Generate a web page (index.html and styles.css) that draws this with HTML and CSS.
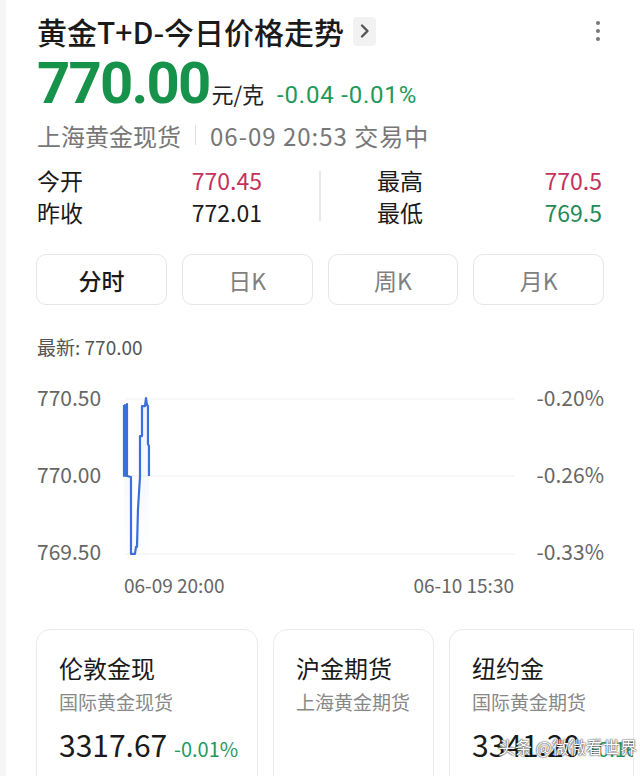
FILE: index.html
```html
<!DOCTYPE html>
<html>
<head>
  <meta charset="utf-8">
  <title>黄金T+D-今日价格走势</title>
  <link rel="stylesheet" href="styles.css">
</head>
<body>
  <div class="panel">

    <!-- 标题 -->
    <div class="head">
      <h1 class="title">黄金T+D-今日价格走势</h1>
      <span class="more-box">
        <svg width="12" height="16" viewBox="0 0 12 16"><path d="M3 2.5 L8.5 8 L3 13.5" fill="none" stroke="#555" stroke-width="2.4" stroke-linecap="round" stroke-linejoin="round"/></svg>
      </span>
      <span class="dots"><i></i><i></i><i></i></span>
    </div>

    <!-- 价格 -->
    <div class="price-row">
      <span class="price">770.00</span>
      <span class="unit">元/克</span>
      <span class="change">-0.04 -0.01%</span>
    </div>
    <div class="market">
      <span>上海黄金现货</span>
      <span class="sep"></span>
      <span class="time">06-09 20:53 交易中</span>
    </div>

    <!-- 行情 -->
    <div class="stats">
      <div class="stat-col">
        <div class="stat"><span>今开</span><span class="up">770.45</span></div>
        <div class="stat"><span>昨收</span><span>772.01</span></div>
      </div>
      <div class="stat-div"></div>
      <div class="stat-col">
        <div class="stat"><span>最高</span><span class="up">770.5</span></div>
        <div class="stat"><span>最低</span><span class="down">769.5</span></div>
      </div>
    </div>

    <div class="tabs">
      <button class="tab active">分时</button>
      <button class="tab">日K</button>
      <button class="tab">周K</button>
      <button class="tab">月K</button>
    </div>

    <!-- 分时图 -->
    <div class="latest">最新: 770.00</div>
    <div class="chart">
      <div class="y-left">
        <span>770.50</span>
        <span>770.00</span>
        <span>769.50</span>
      </div>
      <svg class="plot" width="402" height="190" viewBox="0 0 402 190">
        <defs>
          <linearGradient id="fill" x1="0" y1="0" x2="0" y2="1">
            <stop offset="0" stop-color="#3a6fd8" stop-opacity="0.08"/>
            <stop offset="1" stop-color="#3a6fd8" stop-opacity="0"/>
          </linearGradient>
        </defs>
        <line x1="7" y1="20" x2="397" y2="20" stroke="#f0f0f0" stroke-width="1"/>
        <line x1="7" y1="97" x2="397" y2="97" stroke="#f0f0f0" stroke-width="1"/>
        <line x1="7" y1="175" x2="397" y2="175" stroke="#f0f0f0" stroke-width="1"/>
        <polygon points="6,26 9,25 9,97 13,98 13,175 17,175 18,168 19,168 20,130 22,98 22,57 24,57 24,27 27,27 28,19 29,26 30,27 30,65 31,67 31,97 31,190 6,190" fill="url(#fill)"/>
        <polyline points="6,26 6,97 7,26 8,97 9,25 9,97 13,98 13,175 17,175 18,168 19,168 20,130 22,98 22,57 24,57 24,27 27,27 28,19 29,26 30,27 30,65 31,67 31,97" fill="none" stroke="#3b6fdc" stroke-width="2.2" stroke-linejoin="round"/>
      </svg>
      <div class="y-right">
        <span>-0.20%</span>
        <span>-0.26%</span>
        <span>-0.33%</span>
      </div>
    </div>
    <div class="x-axis">
      <span>06-09 20:00</span>
      <span>06-10 15:30</span>
    </div>

    <!-- 相关品种 -->
    <div class="cards">
      <div class="card w1">
        <div class="card-name">伦敦金现</div>
        <div class="card-sub">国际黄金现货</div>
        <div class="card-val">3317.67 <span class="card-chg">-0.01%</span></div>
      </div>
      <div class="card w2">
        <div class="card-name">沪金期货</div>
        <div class="card-sub">上海黄金期货</div>
      </div>
      <div class="card w3">
        <div class="card-name">纽约金</div>
        <div class="card-sub">国际黄金期货</div>
        <div class="card-val">3341.20 <span class="card-chg">+0.16</span></div>
      </div>
    </div>

    <div class="watermark">头条 @微微看世界</div>
  </div>
</body>
</html>
```

FILE: styles.css
```css
body {
  margin: 0;
  background: #f6f6f6;
  font-family: "Noto Sans CJK SC", "Noto Sans", sans-serif;
  color: #1a1a1a;
}

.panel {
  position: relative;
  margin-left: 6px;
  height: 776px;
  overflow: hidden;
  background: #fff;
  padding-left: 31px;
  padding-right: 36px;
}

.head {
  display: flex;
  align-items: center;
  height: 40px;
  padding-top: 11px;
}

.title {
  margin: 0;
  font-size: 30px;
  font-weight: 500;
  line-height: 40px;
}

.more-box {
  display: flex;
  align-items: center;
  justify-content: center;
  width: 23px;
  height: 29px;
  margin-left: 9px;
  border-radius: 4px;
  background: #f2f2f2;
}

.dots {
  margin-left: auto;
  margin-right: 4px;
  display: flex;
  flex-direction: column;
  gap: 4px;
}

.dots i {
  width: 4px;
  height: 4px;
  border-radius: 50%;
  background: #777;
}

.price-row {
  display: flex;
  align-items: baseline;
  height: 58px;
  margin-top: 3px;
}

.price {
  font-family: Roboto, sans-serif;
  font-weight: 700;
  font-size: 58px;
  letter-spacing: -1.8px;
  line-height: 58px;
  color: #17924a;
}

.unit {
  font-size: 22px;
  margin-left: 2px;
  color: #222;
}

.change {
  font-family: Roboto, sans-serif;
  font-size: 24px;
  letter-spacing: 0.8px;
  margin-left: 13px;
  color: #1e9a5a;
}

.market {
  display: flex;
  align-items: center;
  gap: 14px;
  height: 36px;
  margin-top: 5px;
  font-size: 24px;
  color: #777;
}

.market .time {
  letter-spacing: 1px;
}

.market .sep {
  width: 1px;
  height: 20px;
  background: #ddd;
}

.stats {
  display: flex;
  align-items: center;
  margin-top: 11px;
  font-size: 23px;
}

.stat-col {
  width: 225px;
  display: flex;
  flex-direction: column;
}

.stat {
  display: flex;
  justify-content: space-between;
  height: 32px;
  line-height: 32px;
}

.stat-div {
  width: 2px;
  height: 50px;
  margin: 0 56px 0 57px;
  background: #e8e8e8;
}

.up { color: #c3325c; }
.down { color: #1f8a55; }

.tabs {
  display: flex;
  gap: 15px;
  margin-top: 26px;
  margin-left: -1px;
}

.tab {
  flex: 1;
  height: 51px;
  border: 1px solid #e6e6e6;
  border-radius: 10px;
  background: #fff;
  font-family: inherit;
  font-size: 23px;
  color: #808080;
}

.tab.active {
  color: #1a1a1a;
  font-weight: 500;
}

.latest {
  margin-top: 28px;
  font-size: 19px;
  line-height: 28px;
  color: #555;
}

.chart {
  display: flex;
  margin-top: 18px;
  height: 190px;
}

.y-left, .y-right {
  display: flex;
  flex-direction: column;
  font-size: 21px;
  color: #666;
  padding-top: 4px;
  gap: 49px;
}

.y-left span, .y-right span {
  line-height: 28px;
}

.y-left {
  width: 81px;
}

.y-right {
  margin-left: 17px;
  text-align: right;
  flex: 1;
}

.x-axis {
  display: flex;
  justify-content: space-between;
  width: 390px;
  margin-left: 87px;
  margin-top: 4px;
  font-size: 19px;
  line-height: 24px;
  color: #666;
}

.cards {
  display: flex;
  gap: 15px;
  margin-top: 32px;
  margin-left: -1px;
  margin-right: -36px;
}

.card {
  flex: none;
  height: 170px;
  box-sizing: border-box;
  padding: 20px 0 0 22px;
  border: 1px solid #ebebeb;
  border-radius: 14px;
  overflow: hidden;
  white-space: nowrap;
}

.w1 { width: 222px; }
.w2 { width: 161px; }
.w3 { width: 185px; border-radius: 14px 0 0 0; border-right-color: #ececec; }

.card-name {
  font-size: 24px;
  line-height: 36px;
  color: #1a1a1a;
}

.card-sub {
  font-size: 19px;
  line-height: 32px;
  color: #888;
}

.card-val {
  margin-top: 6px;
  font-size: 30px;
  line-height: 40px;
  color: #1a1a1a;
}

.card-chg {
  font-size: 20px;
  color: #1f9a5e;
}

.watermark {
  position: absolute;
  left: 492px;
  top: 734px;
  font-size: 17px;
  color: #fff;
  text-shadow: 0 0 2px #333, 0 0 1px #333;
}
```
